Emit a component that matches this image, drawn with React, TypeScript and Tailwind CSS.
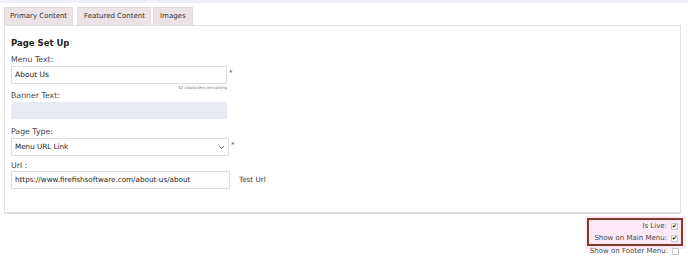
import { ChevronDown } from 'lucide-react';

const font = { fontFamily: '"DejaVu Sans", "Open Sans", sans-serif' };

function Field({ label, gap, children }: { label: string; gap: string; children: React.ReactNode }) {
  return (
    <div className="flex flex-col">
      <span className={`text-[7.8px] leading-[10px] text-[#444] ${gap}`}>{label}</span>
      {children}
    </div>
  );
}

function Check({ label, checked }: { label: string; checked: boolean }) {
  return (
    <div className="flex items-center justify-end gap-[4px] h-[12px] whitespace-nowrap">
      <span className="text-[7px] leading-[10px] text-[#444]">{label}</span>
      <span className="w-[7px] h-[7px] border border-[#c4c4c4] bg-white rounded-[1px] flex items-center justify-center text-[6px] leading-none text-black font-bold">
        {checked ? '✔' : ''}
      </span>
    </div>
  );
}

export default function App() {
  return (
    <div className="w-[688px] h-[262px] bg-white relative overflow-hidden" style={font}>
      <div className="h-[3px] bg-[#eef0f5]" />
      <div className="pl-[4px] pr-[7px] pt-[4px]">
        <div className="flex items-end">
          <div className="w-[69px] h-[18px] pl-[5px] flex items-center bg-[#ebe3e6] border border-[#e2dadd] border-b-0 text-[7px] text-[#333] whitespace-nowrap">
            Primary Content
          </div>
          <div className="ml-[4px] w-[74px] h-[18px] pl-[6px] flex items-center bg-[#ebe3e6] border border-[#e2dadd] border-b-0 text-[7px] text-[#333] whitespace-nowrap">
            Featured Content
          </div>
          <div className="ml-[2px] w-[40px] h-[18px] pl-[6px] flex items-center bg-[#ebe3e6] border border-[#e2dadd] border-b-0 text-[7px] text-[#333] whitespace-nowrap">
            Images
          </div>
        </div>
        <div className="h-[189px] border border-[#e3e3e3] border-b-2 border-b-[#dedede] px-[6px] pt-[12px]">
          <div className="text-[8.5px] leading-[11px] font-bold text-[#222] mb-[6px]">Page Set Up</div>
          <Field label="Menu Text:" gap="mb-[1px]">
            <div className="flex items-start">
              <div className="w-[216px] h-[18px] border border-[#ddd] flex items-center px-[3px] text-[7.5px] text-[#222]">About Us</div>
              <span className="text-[7px] text-[#555] ml-[2px] mt-[2px]">*</span>
            </div>
            <div className="w-[216px] text-right text-[4px] leading-[6px] text-[#777] mt-[1px]">42 characters remaining</div>
          </Field>
          <Field label="Banner Text:" gap="mb-[1px]">
            <div className="w-[216px] h-[17px] bg-[#e9ebf2]" />
          </Field>
          <div className="mt-[8px]">
            <Field label="Page Type:" gap="mb-[1px]">
              <div className="flex items-center">
                <div className="w-[218px] h-[18px] border border-[#ddd] flex items-center justify-between px-[3px] text-[7.2px] text-[#222]">
                  <span>Menu URL Link</span>
                  <ChevronDown size={7} strokeWidth={3} className="text-[#333]" />
                </div>
                <span className="text-[7px] text-[#555] ml-[2px] -mt-[4px]">*</span>
              </div>
            </Field>
          </div>
          <div className="mt-[5px]">
            <Field label="Url :" gap="mb-0">
              <div className="flex items-center">
                <div className="w-[219px] h-[18px] border border-[#ddd] flex items-center px-[3px] text-[7.2px] text-[#222] whitespace-nowrap">
                  https://www.firefishsoftware.com/about-us/about
                </div>
                <span className="text-[7.2px] text-[#333] ml-[9px]">Test Url</span>
              </div>
            </Field>
          </div>
        </div>
        <div className="flex justify-end mt-[2px] -mr-[5px]">
          <div className="w-[101px] bg-[#fde9f5] pt-[2px] pr-[3px] pb-[3px] pl-[2px]">
            <div className="border-2 border-[#7b3a2c] pr-[3px]">
              <Check label="Is Live:" checked />
              <Check label="Show on Main Menu:" checked />
            </div>
          </div>
        </div>
        <div className="flex justify-end -mt-[4px] pr-[2px]">
          <Check label="Show on Footer Menu:" checked={false} />
        </div>
      </div>
    </div>
  );
}
